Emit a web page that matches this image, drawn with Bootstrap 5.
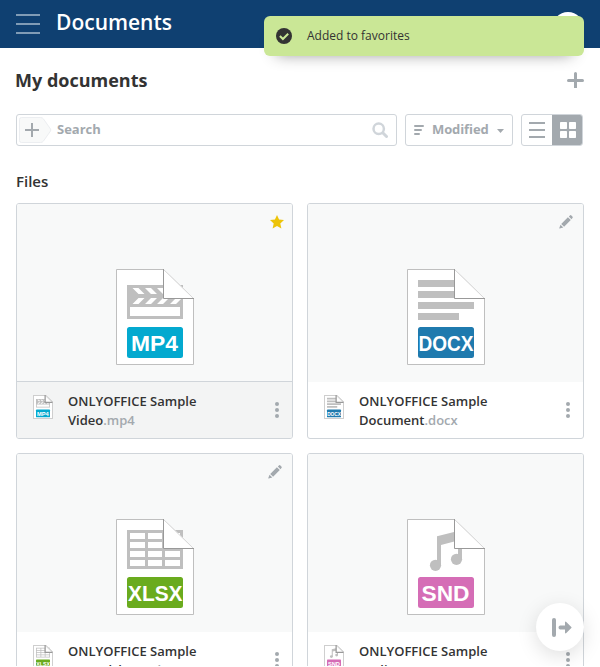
<!DOCTYPE html>
<html lang="en">
<head>
<meta charset="utf-8">
<meta name="viewport" content="width=device-width, initial-scale=1">
<title>Documents</title>
<link href="https://cdn.jsdelivr.net/npm/bootstrap@5.3.0/dist/css/bootstrap.min.css" rel="stylesheet">
<style>
body{font-family:"Open Sans",sans-serif;font-size:13px;color:#333;background:#fff;overflow:hidden}
svg{display:block;flex:none}
.shell{height:666px;overflow:hidden}
.topbar{height:48px;background:#0f4071;gap:16px}
.topbar h1{font-size:21px;line-height:28px;font-weight:600;color:#fff;margin-bottom:5px}
.avatar{width:32px;height:32px;margin-top:8px}
.notice{position:absolute;left:264px;top:16px;width:320px;height:40px;background:#cae796;border-radius:6px;box-shadow:0 10px 16px -12px rgba(0,0,0,.45);font-size:12px;padding-left:12px;gap:15px;z-index:5}
.page-title{font-size:18px;line-height:24px;font-weight:700;margin:0 0 2px -1px}
.title-row{height:66px}
.toolbox{gap:8px;height:32px;margin-right:1px}
.box{border:1px solid #d0d5da;border-radius:3px;height:32px;color:#a3a9ae;font-weight:700;background:#fff}
.search-text{margin-left:5px}
.sort-box{width:108px;padding-left:8px}
.sort-box span{letter-spacing:-.1px}
.caret-mark{margin:2px 0 0 8px}
.view-box{width:62px;overflow:hidden;padding-left:7px}
.view-active{width:31px;height:32px;background:#a3a9ae;margin:-1px -1px -1px 0}
.files-title{font-size:15px;line-height:20px;font-weight:600;margin:25px 0 12px}
.tiles{display:grid;grid-template-columns:277px 277px;gap:14px}
.tile{height:236px;border:1px solid #d0d5da;border-radius:3px;overflow:hidden;background:#fff}
.preview{height:178px;background:#f8f9f9;padding-top:65px}
.mark-icon{position:absolute;right:8px;top:11px}
.mark-icon.edit{right:10px}
.caption{height:56px;padding:0 9px 0 16px}
.tile.selected .preview{height:177px}
.tile.selected .caption{height:57px;background:#f3f4f4;border-top:1px solid #d0d5da}
.thumb{margin-top:13px;stroke-width:5px}
.filename{font-weight:600;line-height:19px;margin:10px 0 0 15px;width:170px}
.filename span{color:#a3a9ae}
.dots{margin:20px 4px 0 auto}
.fab{position:absolute;left:536px;top:603px;width:48px;height:48px;background:#fff;box-shadow:0 5px 20px rgba(0,0,0,.13)}
.tag{font:bold 22.6px "Liberation Sans",Arial,sans-serif;fill:#fff}
</style>
</head>
<body>
<svg width="0" height="0" class="position-absolute">
<defs>
<symbol id="sheet" viewBox="0 0 78 96"><path d="M.5.5h47l30 29v66H.5z" fill="#fff" stroke="#bfbfbf"/></symbol>
<symbol id="fold" viewBox="0 0 78 96"><path d="M47.500 0V29.500H77.500z" fill="#fff"/><path d="M47.500.5l30 29" stroke="#d9d9d9" fill="none"/><path d="M47.500 0V29.500H78" stroke="#999" fill="none"/></symbol>
<symbol id="mp4" viewBox="0 0 78 96"><use href="#sheet"/><path fill="#bfbfbf" d="M11 16h56v34H11z"/><g fill="#fff"><path d="M14 38h50v9H14zM16.500 19h6l6 6h-6zM29 19h6l6 6h-6zM41 19h6l6 6h-6zM22.500 29h6l-6 6h-6zM35 29h6l-6 6h-6zM47 29h6l-6 6h-6zM60 29h6l-6 6h-6z"/></g><use href="#fold"/><rect x="11" y="58" width="56" height="31" rx="2.500" fill="#03a9cf"/><text class="tag" x="15" y="82" textLength="47" lengthAdjust="spacingAndGlyphs">MP4</text></symbol>
<symbol id="docx" viewBox="0 0 78 96"><use href="#sheet"/><path fill="#bfbfbf" d="M11 11h40v7H11zM11 22h40v7H11zM11 33h56v7H11zM11 44h41v7H11z"/><use href="#fold"/><rect x="11" y="58" width="56" height="31" rx="2.500" fill="#1f7aae"/><text class="tag" x="11.500" y="82" textLength="55" lengthAdjust="spacingAndGlyphs">DOCX</text></symbol>
<symbol id="xlsx" viewBox="0 0 78 96"><use href="#sheet"/><path fill="#bfbfbf" d="M11 11h56v39H11z"/><path stroke="#fff" stroke-width="6" d="M14 17h15m3 0h14m3 0h15M14 26h15m3 0h14m3 0h15M14 35h15m3 0h14m3 0h15M14 44h15m3 0h14m3 0h15"/><use href="#fold"/><rect x="11" y="58" width="56" height="31" rx="2.500" fill="#6aab1e"/><text class="tag" x="12" y="82" textLength="54.500" lengthAdjust="spacingAndGlyphs">XLSX</text></symbol>
<symbol id="snd" viewBox="0 0 78 96"><use href="#sheet"/><g fill="#bfbfbf"><path d="M30 17.300L55 11v30h-4V21.500L34 26v21h-4z"/><circle cx="28.500" cy="46.300" r="5.600"/><circle cx="49.500" cy="40.300" r="5.600"/></g><use href="#fold"/><rect x="11" y="58" width="56" height="31" rx="2.500" fill="#d56db6"/><text class="tag" x="14.500" y="82" textLength="48" lengthAdjust="spacingAndGlyphs">SND</text></symbol>
<symbol id="pencil" viewBox="0 0 14 14"><g fill="#a3a9ae"><path d="M9.800 1.400L11.200.3q.6-.4 1.200.1l1.200 1.300q.4.600 0 1.100l-1.100 1.400zM8.900 2.200l2.900 2.900-6.700 6.700L2.200 8.900zM1.500 9.800l2.800 2.800-3.600 1q-.5 0-.4-.5z"/></g></symbol>
<symbol id="dots" viewBox="0 0 4 16"><g fill="#a3a9ae"><circle cx="2" cy="2" r="2"/><circle cx="2" cy="8" r="2"/><circle cx="2" cy="14" r="2"/></g></symbol>
</defs>
</svg>
<div class="shell position-relative">
<header class="topbar d-flex align-items-center px-3">
<svg width="24" height="20"><path d="M0 1h24M0 10h24M0 19h24" stroke="#809cb6" stroke-width="2"/></svg>
<h1>Documents</h1>
<svg class="avatar ms-auto" viewBox="0 0 32 32"><circle cx="16" cy="16" r="16" fill="#fff"/><circle cx="16" cy="12" r="8" fill="#eceeef"/></svg>
</header>
<div class="notice d-flex align-items-center" role="status">
<svg width="16" height="16"><circle cx="8" cy="8" r="8" fill="#333"/><path d="M3.900 8l3 3 5.300-5.300" fill="none" stroke="#cae796" stroke-width="2"/></svg>
<span>Added to favorites</span>
</div>
<main class="px-3">
<div class="title-row d-flex align-items-center justify-content-between">
<h2 class="page-title">My documents</h2>
<svg width="17" height="17" class="mb-1"><path d="M8.500 2.500v14M1.500 9.500h14" stroke="#a3a9ae" stroke-width="3" stroke-linecap="round"/></svg>
</div>
<div class="toolbox d-flex">
<div class="box d-flex align-items-center flex-grow-1 pe-2">
<svg width="35" height="30"><path d="M4.500 2.500h19q2 0 3 1.500l7 10q.6 1 0 2l-7 10q-1 1.500-3 1.500h-19q-2 0-2-2v-21q0-2 2-2z" fill="#f8f9f9" stroke="#eceef1"/><path d="M15 8v14M8 15h14" stroke="#a3a9ae" stroke-width="2"/></svg>
<span class="search-text flex-grow-1">Search</span>
<svg width="16" height="16"><circle cx="6.700" cy="6.700" r="5.200" fill="none" stroke="#d0d5da" stroke-width="2.500"/><path d="M11 11l3.500 3.500" stroke="#d0d5da" stroke-width="3" stroke-linecap="round"/></svg>
</div>
<div class="box sort-box d-flex align-items-center">
<svg width="10" height="10"><path d="M1 1h8M1 5h6M1 9h4" stroke="#a3a9ae" stroke-width="2" stroke-linecap="round"/></svg>
<span class="ms-2">Modified</span>
<svg width="8" height="4" class="caret-mark"><path d="M0 0h7L3.500 4z" fill="#a3a9ae"/></svg>
</div>
<div class="box view-box d-flex justify-content-between align-items-center">
<svg width="16" height="16"><path d="M0 1h16M0 8h16M0 15h16" stroke="#a3a9ae" stroke-width="2"/></svg>
<div class="view-active d-flex align-items-center justify-content-center"><svg width="16" height="16" fill="#fff"><rect width="7" height="7" rx=".7"/><rect x="9" width="7" height="7" rx=".7"/><rect y="9" width="7" height="7" rx=".7"/><rect x="9" y="9" width="7" height="7" rx=".7"/></svg></div>
</div>
</div>
<h3 class="files-title">Files</h3>
<div class="tiles">
<article class="tile selected">
<div class="preview position-relative d-flex justify-content-center"><svg class="mark-icon" width="14" height="14"><path d="M7 0l2.100 4.600 4.900.5-3.700 3.300 1.100 5L7 10.900 2.600 13.400l1.100-5L0 5.100l4.900-.5z" fill="#edc409"/></svg><svg width="78" height="96"><use href="#mp4"/></svg></div>
<div class="caption d-flex"><svg class="thumb" width="20" height="24"><use href="#mp4"/></svg><div class="filename">ONLYOFFICE Sample Video<span>.mp4</span></div><svg class="dots" width="4" height="16"><use href="#dots"/></svg></div>
</article>
<article class="tile">
<div class="preview position-relative d-flex justify-content-center"><svg class="mark-icon edit" width="14" height="14"><use href="#pencil"/></svg><svg width="78" height="96"><use href="#docx"/></svg></div>
<div class="caption d-flex"><svg class="thumb" width="20" height="24"><use href="#docx"/></svg><div class="filename">ONLYOFFICE Sample Document<span>.docx</span></div><svg class="dots" width="4" height="16"><use href="#dots"/></svg></div>
</article>
<article class="tile">
<div class="preview position-relative d-flex justify-content-center"><svg class="mark-icon edit" width="14" height="14"><use href="#pencil"/></svg><svg width="78" height="96"><use href="#xlsx"/></svg></div>
<div class="caption d-flex"><svg class="thumb" width="20" height="24"><use href="#xlsx"/></svg><div class="filename">ONLYOFFICE Sample Spreadsheet<span>.xlsx</span></div><svg class="dots" width="4" height="16"><use href="#dots"/></svg></div>
</article>
<article class="tile">
<div class="preview position-relative d-flex justify-content-center"><svg width="78" height="96"><use href="#snd"/></svg></div>
<div class="caption d-flex"><svg class="thumb" width="20" height="24"><use href="#snd"/></svg><div class="filename">ONLYOFFICE Sample Audio<span>.mp3</span></div><svg class="dots" width="4" height="16"><use href="#dots"/></svg></div>
</article>
</div>
</main>
<div class="fab rounded-circle d-flex align-items-center justify-content-center"><svg width="20" height="19" class="ms-1"><rect x="0" width="4" height="19" rx="2" fill="#a3a9ae"/><path d="M8 7.500h5V4.200q.3-1 1.300-.3l5 5q.6.600 0 1.200l-5 5q-1 .7-1.300-.3V11.500H8q-1.500-.3-1.500-2t1.500-2z" fill="#a3a9ae"/></svg></div>
</div>
<script src="https://cdn.jsdelivr.net/npm/bootstrap@5.3.0/dist/js/bootstrap.bundle.min.js"></script>
</body>
</html>
